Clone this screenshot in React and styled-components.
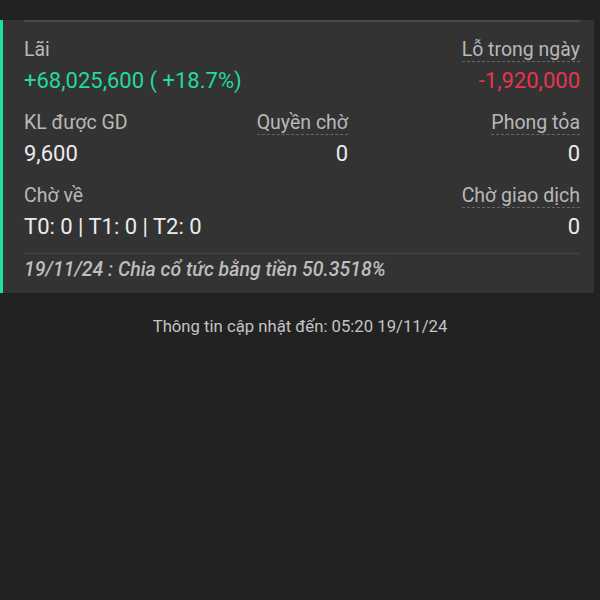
import React from "react";
import styled, { createGlobalStyle } from "styled-components";

const GlobalStyle = createGlobalStyle`
  html, body {
    margin: 0;
    padding: 0;
    background: #222222;
    font-family: Roboto, "Noto Sans", sans-serif;
  }
`;

const Page = styled.div`
  width: 600px;
  height: 600px;
  background: #222222;
  overflow: hidden;
`;

const Card = styled.div`
  width: 594px;
  box-sizing: border-box;
  background: #333333;
  border-left: 3px solid #1ee0a0;
  padding: 0 14px 0 21px;
`;

const TopRule = styled.div`
  height: 2px;
  background: #4a4a4a;
  margin-top: 20px;
`;

const Row = styled.div`
  display: grid;
  grid-template-columns: ${(p) => p.$cols || "1fr 1fr"};
  padding-top: 16px;
`;

const Cell = styled.div`
  display: flex;
  flex-direction: column;
  align-items: ${(p) => (p.$right ? "flex-end" : "flex-start")};
`;

const Label = styled.span`
  font-size: 19.5px;
  line-height: 23px;
  color: #b8b8b8;
  border-bottom: ${(p) => (p.$dashed ? "1px dashed #666666" : "1px solid transparent")};
`;

const Value = styled.span`
  font-size: 22px;
  line-height: 28px;
  margin-top: 5px;
  color: ${(p) => p.$color || "#ececec"};
`;

const Rule = styled.div`
  height: 1px;
  background: #444444;
  margin-top: 12px;
`;

const Note = styled.div`
  font-size: 19.5px;
  font-style: italic;
  font-weight: 500;
  color: #bdbdbd;
  padding: 5px 0 12px;
  line-height: 22px;
  white-space: nowrap;
`;

const Footer = styled.div`
  width: 600px;
  text-align: center;
  font-size: 16.7px;
  line-height: 20px;
  color: #c4c4c4;
  padding-top: 24px;
`;

export default function App() {
  return (
    <Page>
      <GlobalStyle />
      <Card>
        <TopRule />
        <Row>
          <Cell>
            <Label>Lãi</Label>
            <Value $color="#22d9a2">+68,025,600 ( +18.7%)</Value>
          </Cell>
          <Cell $right>
            <Label $dashed>Lỗ trong ngày</Label>
            <Value $color="#e8334f">-1,920,000</Value>
          </Cell>
        </Row>
        <Row $cols="200px 124px 1fr">
          <Cell>
            <Label>KL được GD</Label>
            <Value>9,600</Value>
          </Cell>
          <Cell $right>
            <Label $dashed>Quyền chờ</Label>
            <Value>0</Value>
          </Cell>
          <Cell $right>
            <Label $dashed>Phong tỏa</Label>
            <Value>0</Value>
          </Cell>
        </Row>
        <Row>
          <Cell>
            <Label>Chờ về</Label>
            <Value>T0: 0 | T1: 0 | T2: 0</Value>
          </Cell>
          <Cell $right>
            <Label $dashed>Chờ giao dịch</Label>
            <Value>0</Value>
          </Cell>
        </Row>
        <Rule />
        <Note>19/11/24 : Chia cổ tức bằng tiền 50.3518%</Note>
      </Card>
      <Footer>Thông tin cập nhật đến: 05:20 19/11/24</Footer>
    </Page>
  );
}
